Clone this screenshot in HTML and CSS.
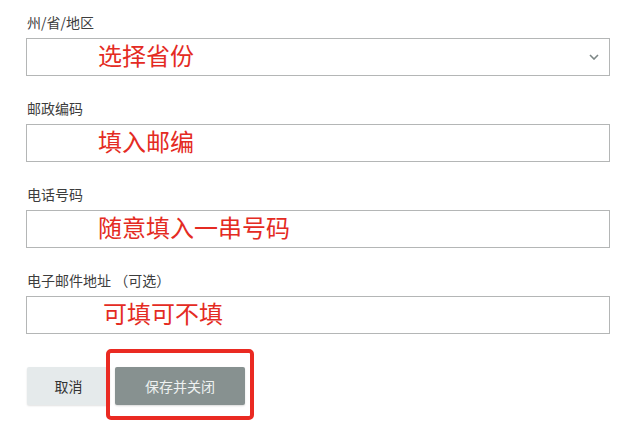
FILE: index.html
```html
<!DOCTYPE html>
<html lang="zh-CN">
<head>
<meta charset="utf-8">
<link rel="stylesheet" href="styles.css">
</head>
<body>
<form class="form">
  <div class="field">
    <div class="label">州/省/地区</div>
    <div class="box select">
      <span class="hint">选择省份</span>
      <svg class="chev" width="10" height="6" viewBox="0 0 10 6"><path d="M1 1 L5 5 L9 1" fill="none" stroke="#7d8786" stroke-width="1.6"/></svg>
    </div>
  </div>
  <div class="field">
    <div class="label">邮政编码</div>
    <div class="box"><span class="hint">填入邮编</span></div>
  </div>
  <div class="field">
    <div class="label">电话号码</div>
    <div class="box"><span class="hint">随意填入一串号码</span></div>
  </div>
  <div class="field">
    <div class="label">电子邮件地址 （可选）</div>
    <div class="box"><span class="hint hint-wide">可填可不填</span></div>
  </div>
  <div class="actions">
    <button type="button" class="btn btn-cancel">取消</button>
    <div class="save-wrap">
      <button type="button" class="btn btn-save">保存并关闭</button>
      <div class="highlight"></div>
    </div>
  </div>
</form>
</body>
</html>
```

FILE: styles.css
```css
html, body {
  margin: 0;
  padding: 0;
  background: #ffffff;
}
body {
  font-family: "Noto Sans CJK SC", "Noto Sans", sans-serif;
  color: #3a3a3a;
}
.form {
  padding: 14px 0 24px 26px;
  width: 584px;
}
.field {
  margin-bottom: 24px;
}
.label {
  font-size: 14px;
  line-height: 16px;
  height: 16px;
  margin-bottom: 8px;
  padding-left: 1px;
  color: #3d3d3d;
}
.box {
  box-sizing: border-box;
  height: 38px;
  border: 1px solid #b4b6b6;
  background: #fff;
  display: flex;
  align-items: center;
  padding-left: 71px;
}
.select {
  justify-content: space-between;
  padding-right: 10px;
}
.hint {
  color: #e42b23;
  font-size: 24px;
  line-height: 30px;
  margin-bottom: 4px;
}
.hint-wide {
  margin-left: 5px;
}
.chev {
  display: block;
}
.actions {
  display: flex;
  align-items: flex-start;
  gap: 5px;
  margin-top: 33px;
  padding-left: 1px;
  padding-bottom: 16px;
}
.btn {
  display: block;
  border: 0;
  height: 38px;
  font-family: "Noto Sans CJK SC", "Noto Sans", sans-serif;
  font-size: 14px;
  border-radius: 2px;
  padding: 0;
}
.btn-cancel {
  width: 83px;
  background: #e5eaeb;
  color: #333;
  box-shadow: 0 1px 2px rgba(0,0,0,0.12);
}
.save-wrap {
  position: relative;
}
.btn-save {
  width: 130px;
  background: #879190;
  color: #eef1f1;
  box-shadow: 0 1px 2px rgba(0,0,0,0.15);
}
.highlight {
  position: absolute;
  left: -9px;
  top: -18px;
  right: -9px;
  bottom: -15px;
  border: 4px solid #ea2a22;
  border-radius: 5px;
  pointer-events: none;
}
```
